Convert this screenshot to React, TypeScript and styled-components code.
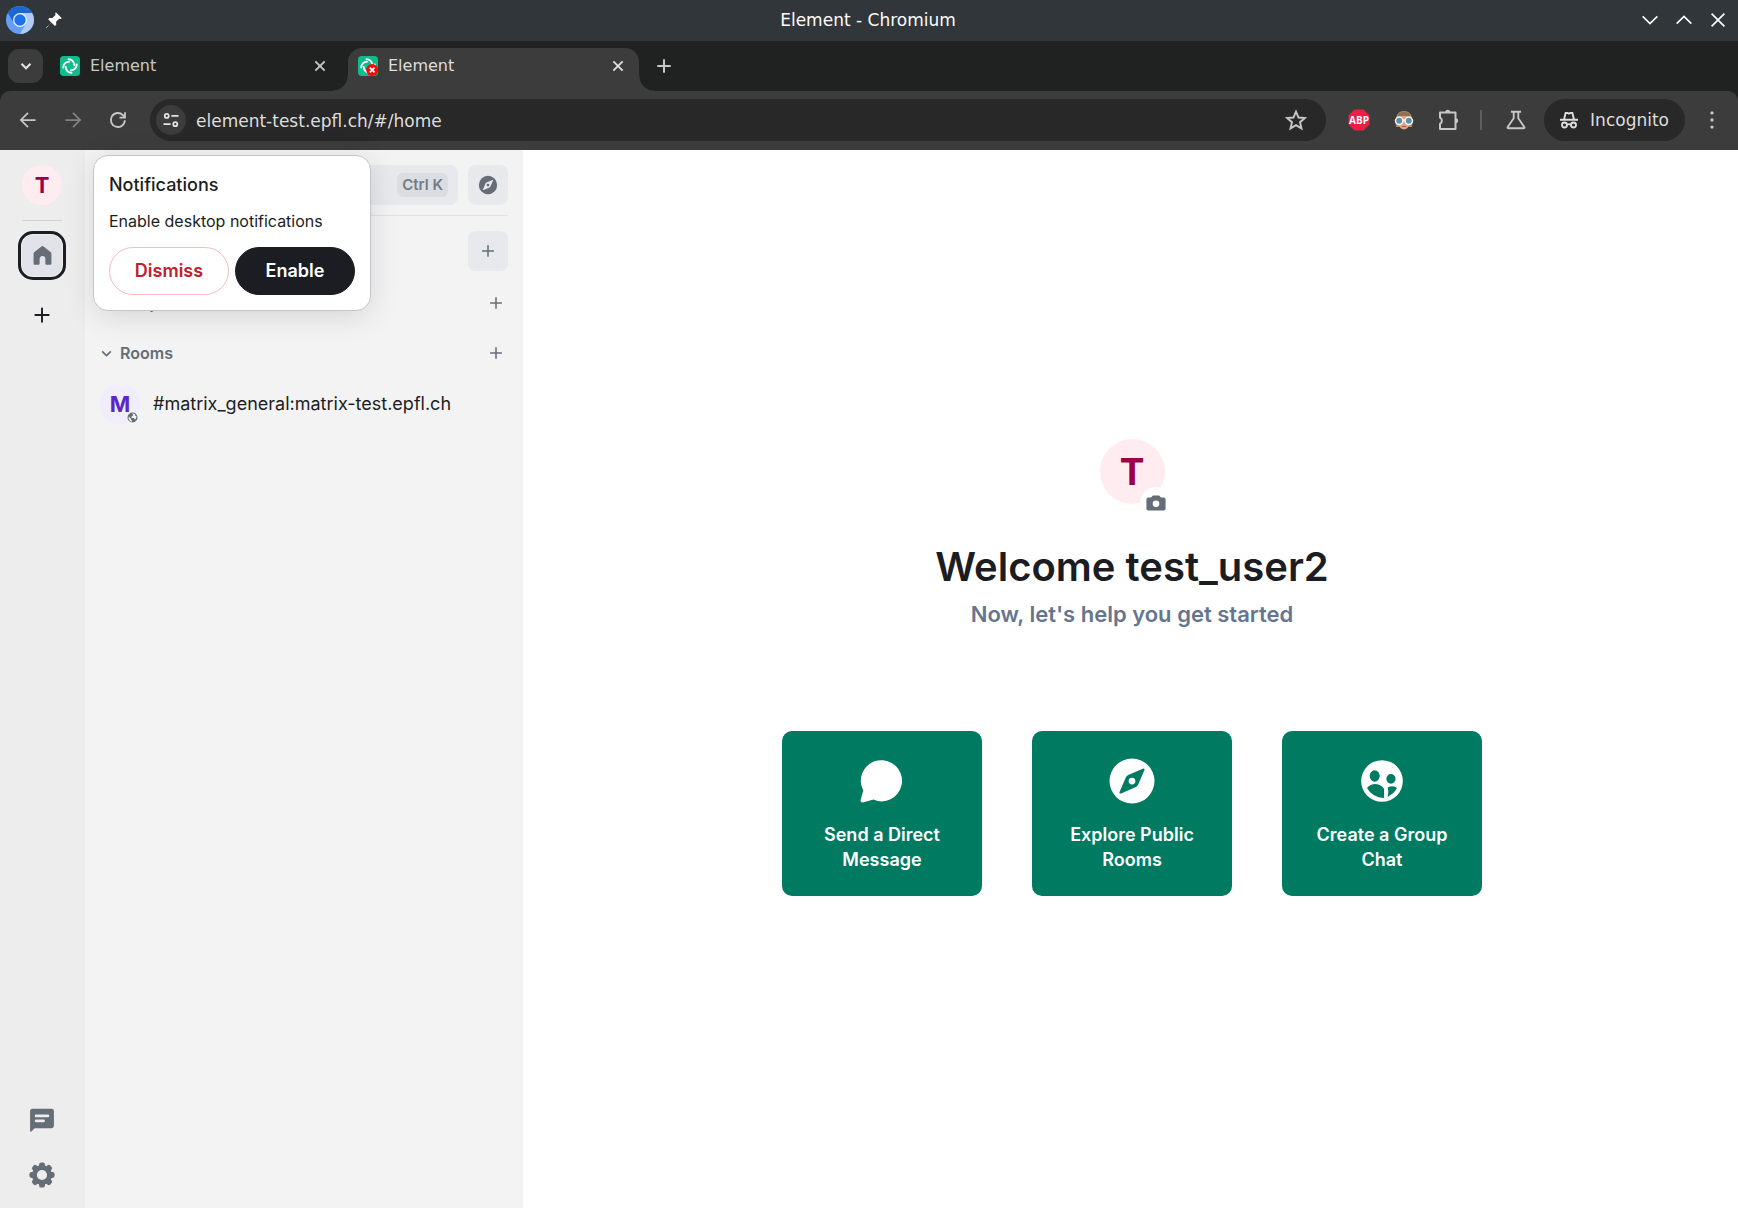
import React from "react";
import styled, { createGlobalStyle } from "styled-components";

const ui = '"DejaVu Sans", "Liberation Sans", sans-serif';
const app = 'Inter, "Liberation Sans", sans-serif';

const GlobalStyle = createGlobalStyle`
  *, *::before, *::after { box-sizing: border-box; }
  html, body, #root { height: 100%; }
  body { margin: 0; background: #fff; overflow: hidden; }
  button, input { font: inherit; color: inherit; }
  h1, h2, p { margin: 0; }
`;

const Svg = styled.svg<{ $size: number }>`
  display: block;
  flex: none;
  width: ${(p) => p.$size}px;
  height: ${(p) => p.$size}px;
`;

type IconProps = { size?: number };

const strokeIcon = (d: string, width = 2, cap: "butt" | "round" = "butt") =>
  function StrokeIcon({ size = 24 }: IconProps) {
    return (
      <Svg $size={size} viewBox="0 0 24 24" fill="none" stroke="currentColor" strokeWidth={width} strokeLinecap={cap} aria-hidden>
        <path d={d} />
      </Svg>
    );
  };

const solidIcon = (d: string) =>
  function SolidIcon({ size = 24 }: IconProps) {
    return (
      <Svg $size={size} viewBox="0 0 24 24" fill="currentColor" fillRule="evenodd" aria-hidden>
        <path d={d} />
      </Svg>
    );
  };

const WindowDown = strokeIcon("M4 8l8 8 8-8", 1.8);
const WindowUp = strokeIcon("M4 16l8-8 8 8", 1.8);
const WindowClose = strokeIcon("M5 5l14 14M19 5L5 19", 1.8);
const ChevronDown = strokeIcon("M6 9l6 6 6-6", 2.8);
const Close = strokeIcon("M5 5l14 14M19 5L5 19", 2.8);
const TabPlus = strokeIcon("M12 4v16M4 12h16", 2.4);
const ArrowLeft = strokeIcon("M21 12H4M12 3.5L3.5 12l8.5 8.5", 2.1);
const ArrowRight = strokeIcon("M3 12h17M12 3.5l8.5 8.5-8.5 8.5", 2.1);
const Reload = strokeIcon("M20.2 12.2a8.4 8.4 0 1 1-2.4-6.1l2.2 2.3M20.4 2.6v6.6h-6.6", 2.2);
const Tune = strokeIcon("M12.5 6.5H22M2 17.5h9.500M9 6.500a2.700 2.700 0 1 1-5.400 0a2.700 2.700 0 1 1 5.400 0M20.400 17.500a2.700 2.700 0 1 1-5.400 0a2.700 2.700 0 1 1 5.400 0", 2.3);
const Star = strokeIcon("M12 3.600l2.500 5.900 6.400.5-4.900 4.200 1.500 6.200L12 17.100l-5.500 3.300L8 14.200 3.100 10l6.400-.5z", 1.9);
const Flask = strokeIcon("M6.500 3h11M9.500 3v7L3 19.500q-.8 1.500 1 1.500h16q1.800 0 1-1.500L14.500 10V3", 2);
const Plus = strokeIcon("M12 4v16M4 12h16", 2.3, "round");
const SmallChevron = strokeIcon("M4 8l8 8 8-8", 3);
const Dots = solidIcon("M14 3.500a2 2 0 1 1-4 0a2 2 0 1 1 4 0M14 12a2 2 0 1 1-4 0a2 2 0 1 1 4 0M14 20.500a2 2 0 1 1-4 0a2 2 0 1 1 4 0");
const Home = solidIcon("M3 22.500q-1.200 0-1.200-1.200V10q0-1.200 1-2L10.800 1.600Q12 .8 13.200 1.600L21.200 8q1 .8 1 2V21.300q0 1.200-1.200 1.200H16.400q-1.100 0-1.100-1.100V16a3.300 3.300 0 0 0-6.600 0V21.400q0 1.100-1.100 1.100z");
const Compass = solidIcon("M12 2a10 10 0 1 0 0 20a10 10 0 1 0 0-20zM17.500 7.200L14.700 13.700Q14.400 14.400 13.700 14.700L7.200 17.500Q6.200 17.800 6.500 16.800L9.300 10.300Q9.600 9.600 10.300 9.300L16.800 6.500Q17.800 6.200 17.500 7.200zM12 10.500a1.500 1.500 0 1 0 0 3a1.500 1.500 0 1 0 0-3z");
const Bubble = solidIcon("M12 21.800q-2.100 0-4.100-.9Q5.500 21.600 2.700 22.300Q1.600 22.300 1.700 21.300L3 16.600A9.900 9.900 0 1 1 12 21.800z");
const Group = solidIcon("M12 2a10 10 0 1 0 0 20a10 10 0 1 0 0-20zM8.500 6.900a2.400 2.700 0 1 1 0 5.400a2.400 2.700 0 1 1 0-5.400zM16.300 8.700a2.200 2.300 0 1 1 0 4.600a2.200 2.300 0 1 1 0-4.600zM4.800 15.400Q6.300 13.500 9 13.500Q11.600 13.700 13 15.800V20.200Q7.300 19.900 4.800 15.400zM14.700 15.100Q17.400 13.900 19.200 15.400Q17.700 18.300 14.700 19.500Q15.300 17 14.700 15.100z");
const Thread = solidIcon("M3.200 1.500H20.800Q23 1.500 23 3.700V17.300Q23 19.500 20.800 19.500H5.200L2.200 22.500Q1 23.300 1 21.800V3.700Q1 1.500 3.200 1.500zM6.500 7a1.200 1.200 0 0 0 0 2.400H17.500a1.200 1.200 0 0 0 0-2.400zM6.500 11.600a1.200 1.200 0 0 0 0 2.400H13.500a1.200 1.200 0 0 0 0-2.400z");
const Camera = solidIcon("M2.500 5.500H6L7.800 3.300Q8.200 2.900 9 2.900H15Q15.800 2.900 16.200 3.300L18 5.500H21.500Q23.500 5.500 23.500 7.500V19Q23.500 21 21.500 21H2.500Q.5 21 .5 19V7.500Q.5 5.500 2.500 5.500zM12 9a4 4 0 1 0 0 8a4 4 0 1 0 0-8z");
const Globe = solidIcon("M12 1a11 11 0 1 0 0 22a11 11 0 1 0 0-22zM4 10l5 5v2l2 2v2Q5 20 3.300 14zM10 3.500L13 5v3l-3 2v3h5l2 3h1.500Q21 13 20.500 9L18 8l-1-3q-3-2.500-7-1.500z");
const Pin = solidIcon("M14.500 1.500l8 8-2 1-1.500-.3-4.200 4.200.2 3.800-1.800 1.800-4.700-4.700L2 22.500 1.500 22l7.200-6.500L4.200 11 6 9.200l3.800.2L14 5.200 13.600 3.300z");

const Gear = ({ size = 26 }: IconProps) => (
  <Svg $size={size} viewBox="-12 -12 24 24" aria-hidden>
    <g fill="currentColor">
      {[0, 45, 90, 135].map((a) => (
        <rect key={a} x="-2.7" y="-11.6" width="5.400" height="23.200" rx="2" transform={`rotate(${a})`} />
      ))}
      <circle r="9.300" />
    </g>
    <circle r="4.700" fill="#ededed" />
  </Svg>
);

const ElementLogo = ({ failed }: { failed?: boolean }) => (
  <Svg $size={20} viewBox="0 0 24 24" aria-hidden>
    <rect width="24" height="24" rx="4.500" fill="#0dbd8b" />
    <g fill="none" stroke="#fff" strokeWidth="2.300" strokeLinecap="round">
      {[0, 90, 180, 270].map((a) => (
        <path key={a} d="M10.200 3.900a6.900 6.900 0 0 1 6.900 6.900" transform={`rotate(${a} 12 12)`} />
      ))}
    </g>
    {failed && (
      <g>
        <circle cx="17" cy="16.800" r="7.200" fill="#f50a0a" />
        <path d="M14.200 14l5.600 5.600M19.800 14l-5.600 5.600" stroke="#fff" strokeWidth="2" />
      </g>
    )}
  </Svg>
);

const ChromiumLogo = () => (
  <Svg $size={28} viewBox="0 0 28 28" aria-hidden>
    <circle cx="14" cy="14" r="14" fill="#669df6" />
    <path d="M1.900 7a14 14 0 0 1 24.200 0H14L8 17.500z" fill="#1967d2" />
    <path d="M14 7h12.100A14 14 0 0 1 14 28l6-10.500z" fill="#aecbfa" />
    <circle cx="14" cy="14" r="7" fill="#e8f0fe" />
    <circle cx="14" cy="14" r="5.700" fill="#1a73e8" />
  </Svg>
);

const AdblockLogo = () => (
  <Svg $size={22} viewBox="0 0 22 22" aria-hidden>
    <path d="M6.500.5h9l6 6v9l-6 6h-9l-6-6v-9z" fill="#ed1e45" />
    <text x="11" y="14.500" textAnchor="middle" fontSize="10" fontWeight="700" fontFamily="Open Sans, sans-serif" fill="#fff">ABP</text>
  </Svg>
);

const FaceLogo = () => (
  <Svg $size={20} viewBox="0 0 20 20" aria-hidden>
    <path d="M2 17Q0 1 10 1t8 16z" fill="#a98a62" />
    <path d="M3.500 9Q10 2 16.500 9v3.500Q14 19.500 10 19.500T3.500 12.500z" fill="#e0a184" />
    <path d="M3 8Q10 3.500 17 8L15 3Q10 1 5 3z" fill="#8d7251" />
    <g fill="#5f8fa3" stroke="#f4f6f7" strokeWidth="1.500">
      <circle cx="5.200" cy="10.800" r="3.700" />
      <circle cx="14.800" cy="10.800" r="3.700" />
      <path d="M8.900 10.200h2.200" />
    </g>
    <path d="M8 16.500h4" stroke="#b4554a" />
  </Svg>
);

const Puzzle = () => (
  <Svg $size={24} viewBox="0 0 24 24" fill="none" stroke="currentColor" strokeWidth="2" strokeLinejoin="round" aria-hidden>
    <path d="M3 4.500h15.500V21H3v-5.200a3.400 3.400 0 0 0 0-6.100z" />
    <path d="M8.500 4a2.200 2.200 0 0 1 4.400 0zM19 10.500a2.200 2.200 0 0 1 0 4.400z" fill="currentColor" stroke="none" />
    <path d="M9 4a1.900 1.900 0 0 1 3.600 0M18.800 11a1.900 1.900 0 0 1 0 3.600" strokeWidth="1.500" />
  </Svg>
);

const IncognitoIcon = () => (
  <Svg $size={20} viewBox="0 0 20 20" fill="none" stroke="currentColor" strokeWidth="1.900" aria-hidden>
    <path d="M1 9.800h18M5 9.500L6.600 3h1.900L10 3.700 11.500 3h1.900L15 9.500" />
    <circle cx="5.500" cy="15" r="2.500" />
    <circle cx="14.500" cy="15" r="2.500" />
    <path d="M8 14.700q2-1.200 4 0" />
  </Svg>
);

/* ---------- Browser window ---------- */

const Window = styled.div`
  display: flex;
  flex-direction: column;
  height: 100vh;
`;

const TitleBar = styled.header`
  display: grid;
  grid-template-columns: 1fr auto 1fr;
  align-items: center;
  height: 41px;
  padding: 0 8px 2px 6px;
  background: #31363b;
  color: #fcfcfc;
  font: 17px/20px ${ui};
`;

const Cluster = styled.div<{ $gap: number; $end?: boolean }>`
  display: flex;
  align-items: center;
  justify-content: ${(p) => (p.$end ? "flex-end" : "flex-start")};
  gap: ${(p) => p.$gap}px;
`;

const PlainButton = styled.button<{ $w: number; $h?: number; $faded?: boolean }>`
  display: grid;
  place-items: center;
  flex: none;
  width: ${(p) => p.$w}px;
  height: ${(p) => p.$h ?? p.$w}px;
  padding: 0;
  border: 0;
  background: none;
  color: inherit;
  opacity: ${(p) => (p.$faded ? 0.5 : 1)};
`;

const TabStrip = styled.nav`
  display: flex;
  align-items: flex-end;
  height: 50px;
  padding: 0 8px;
  background: #202221;
  color: #c7c9c8;
  font: 16px/20px ${ui};
`;

const TabSearch = styled.button`
  display: grid;
  place-items: center;
  align-self: center;
  width: 35px;
  height: 34px;
  margin-right: 7px;
  padding: 0;
  border: 0;
  border-radius: 11px;
  background: #3c3c3c;
  color: #e3e3e3;
`;

const Tab = styled.div<{ $active?: boolean }>`
  position: relative;
  display: flex;
  align-items: center;
  gap: 10px;
  flex: 0 1 291px;
  height: 43px;
  margin-right: 7px;
  padding: 0 11px 7px 10px;
  border-radius: 14px 14px 0 0;
  background: ${(p) => (p.$active ? "#3c3c3c" : "transparent")};
  color: ${(p) => (p.$active ? "#dedede" : "inherit")};

  &::before,
  &::after {
    content: "";
    display: ${(p) => (p.$active ? "block" : "none")};
    position: absolute;
    bottom: 0;
    width: 15px;
    height: 15px;
  }
  &::before {
    right: 100%;
    background: radial-gradient(circle at 0 0, transparent 14px, #3c3c3c 15px);
  }
  &::after {
    left: 100%;
    background: radial-gradient(circle at 100% 0, transparent 14px, #3c3c3c 15px);
  }
`;

const TabTitle = styled.span`
  flex: 1;
`;

const NewTab = styled(PlainButton)`
  margin-bottom: 7px;
`;

const ToolbarBack = styled.div`
  background: #202221;
`;

const Toolbar = styled.div`
  display: flex;
  align-items: center;
  height: 59px;
  padding: 0 11px 1px 12px;
  border-radius: 10px 10px 0 0;
  background: #3c3c3c;
  color: #c7c7c7;
  font: 17px/22px ${ui};
`;

const AddressBar = styled.form`
  display: flex;
  align-items: center;
  flex: 1;
  height: 42px;
  margin: 0 17px 0 16px;
  padding: 0 14px 0 6px;
  border-radius: 21px;
  background: #282828;
`;

const SiteInfo = styled.button`
  display: grid;
  place-items: center;
  width: 30px;
  height: 30px;
  padding: 0;
  border: 0;
  border-radius: 50%;
  background: #3c3c3c;
  color: #e3e3e3;
`;

const UrlInput = styled.input`
  flex: 1;
  min-width: 0;
  height: 32px;
  padding: 2px 0 0 10px;
  border: 0;
  outline: 0;
  background: none;
  color: #dedede;
`;

const ToolDivider = styled.span`
  width: 2px;
  height: 20px;
  margin: 0 18px 0 15px;
  background: #5e5e5e;
`;

const Incognito = styled.button`
  display: flex;
  align-items: center;
  gap: 11px;
  height: 42px;
  margin: 0 12px;
  padding: 0 16px 0 15px;
  border: 0;
  border-radius: 21px;
  background: #282828;
  color: #dedede;
`;

/* ---------- Element client ---------- */

const Client = styled.div`
  position: relative;
  display: flex;
  flex: 1;
  min-height: 0;
  background: #fff;
  color: #1b1d22;
  font: 18px/24px ${app};
`;

const SpacePanel = styled.nav`
  display: flex;
  flex-direction: column;
  align-items: center;
  flex: none;
  width: 85px;
  padding: 15px 1px 15px 0;
  background: #ededed;
`;

const Avatar = styled.span<{ $size: number; $bg: string; $fg: string; $font: number }>`
  display: grid;
  place-items: center;
  flex: none;
  width: ${(p) => p.$size}px;
  height: ${(p) => p.$size}px;
  padding-bottom: 1px;
  border-radius: 50%;
  background: ${(p) => p.$bg};
  color: ${(p) => p.$fg};
  font-size: ${(p) => p.$font}px;
  line-height: 1;
  font-weight: 700;
`;

const SpaceRule = styled.hr`
  width: 40px;
  height: 1px;
  margin: 15px 0 10px;
  border: 0;
  background: #cfd2d8;
`;

const HomeButton = styled.button`
  display: grid;
  place-items: center;
  width: 48px;
  height: 49px;
  margin-bottom: 15px;
  padding: 1px;
  border: 3px solid #1b1d22;
  border-radius: 15px;
  background: #e1e3e8 content-box;
  color: #656d77;
`;

const SpaceFooter = styled.div`
  display: flex;
  flex-direction: column;
  gap: 15px;
  margin-top: auto;
  margin-bottom: -2px;
  color: #656d77;
`;

const RoomPanel = styled.aside`
  display: flex;
  flex-direction: column;
  flex: none;
  width: 438px;
  padding: 15px;
  background: #f3f3f3;
  color: #656d77;
`;

const SearchRow = styled.div`
  display: flex;
  gap: 10px;
  padding-bottom: 10px;
  border-bottom: 1px solid #e0e2e6;
`;

const SearchButton = styled.button`
  display: flex;
  align-items: center;
  flex: 1;
  height: 40px;
  padding: 0 10px;
  border: 0;
  border-radius: 8px;
  background: #e7e9ed;
`;

const Shortcut = styled.kbd`
  margin-left: auto;
  padding: 0 5px;
  border-radius: 6px;
  background: #dadde1;
  color: #737c85;
  font: 600 15px/24px ${app};
`;

const SquareButton = styled.button`
  display: grid;
  place-items: center;
  flex: none;
  width: 40px;
  height: 40px;
  padding: 0;
  border: 0;
  border-radius: 8px;
  background: #e7e9ed;
`;

const HeaderRow = styled.div`
  display: flex;
  align-items: center;
  justify-content: space-between;
  padding-top: 15px;
  margin-bottom: 7px;
`;

const PanelTitle = styled.h2`
  color: #1b1d22;
  font-size: 18px;
  font-weight: 600;
`;

const Section = styled.div`
  display: flex;
  align-items: center;
  height: 50px;
`;

const SectionToggle = styled.button`
  display: flex;
  align-items: center;
  gap: 7px;
  flex: 1;
  padding: 0;
  border: 0;
  background: none;
  font-size: 16px;
  font-weight: 600;
  text-align: left;
`;

const RoomTile = styled.a`
  display: flex;
  align-items: center;
  gap: 13px;
  margin-top: 6px;
  color: #1b1d22;
  text-decoration: none;
  white-space: nowrap;
`;

const Badged = styled.span`
  position: relative;
`;

const RoomBadge = styled.span`
  position: absolute;
  right: 1px;
  bottom: 0;
  padding: 1px;
  border-radius: 50%;
  background: #f3f3f3;
  color: #656d77;
`;

const Toast = styled.section`
  position: absolute;
  top: 5px;
  left: 93px;
  width: 278px;
  padding: 15px;
  border: 1px solid #c1c5cb;
  border-radius: 15px;
  background: #fff;
  box-shadow: 0 5px 30px rgba(0, 0, 0, 0.12);
`;

const ToastTitle = styled.h2`
  font-size: 18px;
  line-height: 28px;
  font-weight: 500;
`;

const ToastText = styled.p`
  margin: 11px 0 15px;
  font-size: 16px;
  line-height: 22px;
`;

const ToastActions = styled.div`
  display: grid;
  grid-template-columns: 1fr 1fr;
  gap: 6px;
`;

const PillButton = styled.button<{ $primary?: boolean }>`
  height: 48px;
  padding: 0;
  border: 1px solid ${(p) => (p.$primary ? "#1b1d22" : "#f5bcbc")};
  border-radius: 24px;
  background: ${(p) => (p.$primary ? "#1b1d22" : "#fff")};
  color: ${(p) => (p.$primary ? "#fff" : "#c0212c")};
  font-weight: 600;
`;

const Main = styled.main`
  display: flex;
  flex-direction: column;
  align-items: center;
  justify-content: center;
  flex: 1;
  min-width: 0;
  padding: 0 0 23px 3px;
`;

const CameraButton = styled.button`
  position: absolute;
  right: -7px;
  bottom: -15px;
  display: grid;
  place-items: center;
  width: 32px;
  height: 32px;
  padding: 0;
  border: 0;
  border-radius: 50%;
  background: #fff;
  color: #656d77;
`;

const Welcome = styled.h1`
  margin-top: 38px;
  font-size: 40px;
  line-height: 50px;
  font-weight: 600;
`;

const Lead = styled.p`
  margin: 6px 0 101px;
  color: #66758f;
  font-size: 22px;
  line-height: 32px;
  font-weight: 600;
`;

const Cards = styled.div`
  display: flex;
  gap: 50px;
`;

const Card = styled.button`
  display: flex;
  flex-direction: column;
  align-items: center;
  width: 200px;
  height: 165px;
  padding: 22px 25px 0;
  border: 0;
  border-radius: 10px;
  background: #007a61;
  color: #fff;
  font-size: 18px;
  line-height: 25px;
  font-weight: 600;
`;

const CardIcon = styled.span`
  display: grid;
  place-items: center;
  height: 56px;
  margin-bottom: 13px;
`;

const actions = [
  { label: "Send a Direct Message", icon: <Bubble size={50} /> },
  { label: "Explore Public Rooms", icon: <Compass size={54} /> },
  { label: "Create a Group Chat", icon: <Group size={50} /> },
];

export default function App() {
  return (
    <Window>
      <GlobalStyle />
      <TitleBar>
        <Cluster $gap={11}>
          <ChromiumLogo />
          <Pin size={18} />
        </Cluster>
        <span>Element - Chromium</span>
        <Cluster $gap={10} $end>
          <PlainButton $w={24} aria-label="Minimize"><WindowDown size={22} /></PlainButton>
          <PlainButton $w={24} aria-label="Maximize"><WindowUp size={22} /></PlainButton>
          <PlainButton $w={24} aria-label="Close window"><WindowClose size={22} /></PlainButton>
        </Cluster>
      </TitleBar>

      <TabStrip>
        <TabSearch aria-label="Search tabs"><ChevronDown size={18} /></TabSearch>
        <Tab>
          <ElementLogo />
          <TabTitle>Element</TabTitle>
          <PlainButton $w={20} aria-label="Close tab"><Close size={16} /></PlainButton>
        </Tab>
        <Tab $active>
          <ElementLogo failed />
          <TabTitle>Element</TabTitle>
          <PlainButton $w={20} aria-label="Close tab"><Close size={16} /></PlainButton>
        </Tab>
        <NewTab $w={36} aria-label="New tab"><TabPlus size={20} /></NewTab>
      </TabStrip>

      <ToolbarBack>
        <Toolbar>
          <Cluster $gap={13}>
            <PlainButton $w={32} aria-label="Back"><ArrowLeft size={20} /></PlainButton>
            <PlainButton $w={32} aria-label="Forward" $faded><ArrowRight size={20} /></PlainButton>
            <PlainButton $w={32} aria-label="Reload"><Reload size={20} /></PlainButton>
          </Cluster>
          <AddressBar>
            <SiteInfo type="button" aria-label="View site information"><Tune size={18} /></SiteInfo>
            <UrlInput aria-label="Address" defaultValue="element-test.epfl.ch/#/home" />
            <PlainButton $w={32} type="button" aria-label="Bookmark this tab"><Star size={24} /></PlainButton>
          </AddressBar>
          <Cluster $gap={13}>
            <PlainButton $w={32} aria-label="Adblock Plus"><AdblockLogo /></PlainButton>
            <PlainButton $w={32} aria-label="Privacy extension"><FaceLogo /></PlainButton>
            <PlainButton $w={32} aria-label="Extensions"><Puzzle /></PlainButton>
          </Cluster>
          <ToolDivider />
          <PlainButton $w={32} aria-label="Experiments"><Flask size={22} /></PlainButton>
          <Incognito><IncognitoIcon />Incognito</Incognito>
          <PlainButton $w={30} aria-label="Menu"><Dots size={20} /></PlainButton>
        </Toolbar>
      </ToolbarBack>

      <Client>
        <SpacePanel>
          <PlainButton $w={40} aria-label="User menu">
            <Avatar $size={40} $bg="#ffecf0" $fg="#9b0049" $font={22}>T</Avatar>
          </PlainButton>
          <SpaceRule />
          <HomeButton aria-label="Home"><Home size={21} /></HomeButton>
          <PlainButton $w={40} aria-label="Create a space"><Plus size={20} /></PlainButton>
          <SpaceFooter>
            <PlainButton $w={40} aria-label="Threads"><Thread size={26} /></PlainButton>
            <PlainButton $w={40} aria-label="Quick settings"><Gear size={26} /></PlainButton>
          </SpaceFooter>
        </SpacePanel>

        <RoomPanel>
          <SearchRow>
            <SearchButton aria-label="Search"><Shortcut>Ctrl K</Shortcut></SearchButton>
            <SquareButton aria-label="Explore rooms"><Compass size={22} /></SquareButton>
          </SearchRow>
          <HeaderRow>
            <PanelTitle>Home</PanelTitle>
            <SquareButton aria-label="Add"><Plus size={16} /></SquareButton>
          </HeaderRow>
          <Section>
            <SectionToggle><SmallChevron size={13} />People</SectionToggle>
            <PlainButton $w={24} aria-label="Start chat"><Plus size={16} /></PlainButton>
          </Section>
          <Section>
            <SectionToggle><SmallChevron size={13} />Rooms</SectionToggle>
            <PlainButton $w={24} aria-label="Add room"><Plus size={16} /></PlainButton>
          </Section>
          <RoomTile href="#/room">
            <Badged>
              <Avatar $size={40} $bg="#f1edfd" $fg="#5b26c8" $font={22}>M</Avatar>
              <RoomBadge><Globe size={11} /></RoomBadge>
            </Badged>
            #matrix_general:matrix-test.epfl.ch
          </RoomTile>
        </RoomPanel>

        <Main>
          <Badged>
            <Avatar $size={65} $bg="#ffecf0" $fg="#9b0049" $font={37}>T</Avatar>
            <CameraButton aria-label="Upload picture"><Camera size={20} /></CameraButton>
          </Badged>
          <Welcome>Welcome test_user2</Welcome>
          <Lead>Now, let's help you get started</Lead>
          <Cards>
            {actions.map((a) => (
              <Card key={a.label}>
                <CardIcon>{a.icon}</CardIcon>
                {a.label}
              </Card>
            ))}
          </Cards>
        </Main>

        <Toast role="dialog" aria-label="Notifications">
          <ToastTitle>Notifications</ToastTitle>
          <ToastText>Enable desktop notifications</ToastText>
          <ToastActions>
            <PillButton>Dismiss</PillButton>
            <PillButton $primary>Enable</PillButton>
          </ToastActions>
        </Toast>
      </Client>
    </Window>
  );
}
